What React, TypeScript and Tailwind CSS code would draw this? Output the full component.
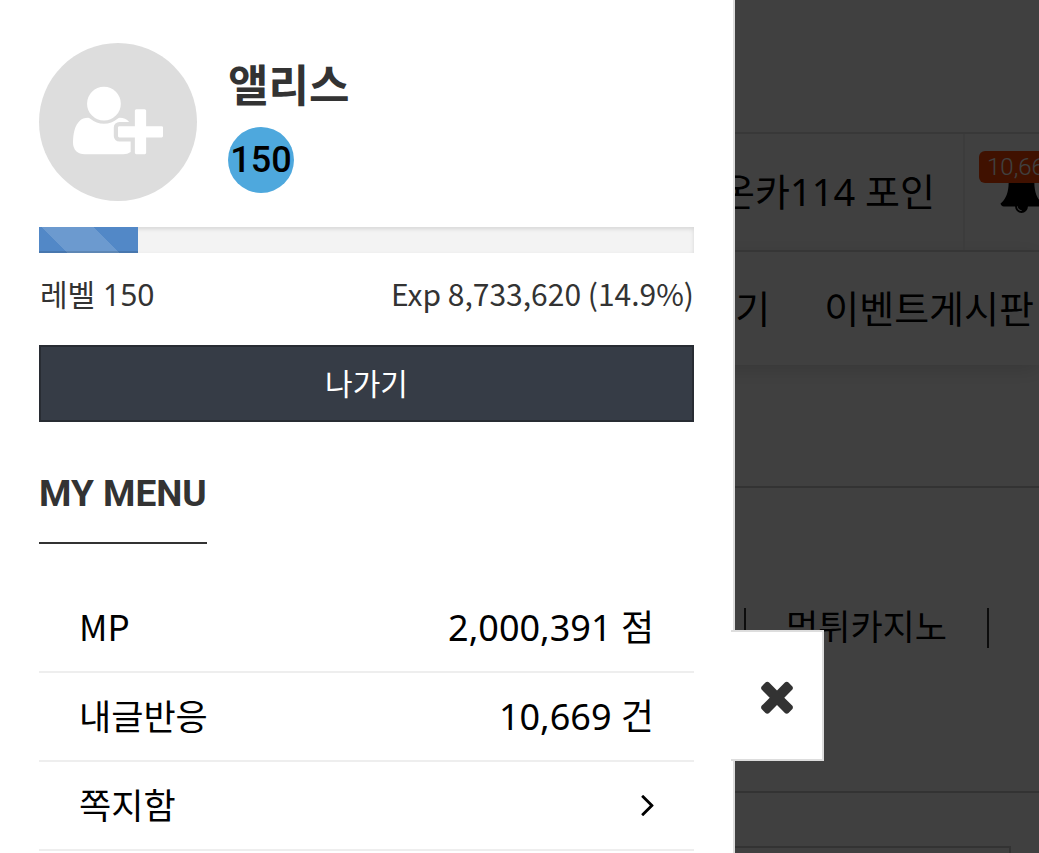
import type { ReactNode } from 'react';

type MenuItem = {
  label: string;
  value?: string;
};

const menu: MenuItem[] = [
  { label: 'MP', value: '2,000,391 점' },
  { label: '내글반응', value: '10,669 건' },
  { label: '쪽지함' },
];

const exp = { level: 150, points: '8,733,620', percent: 14.9 };

export default function App() {
  return (
    <div className="relative h-screen overflow-hidden bg-white font-['Noto_Sans','Noto_Sans_CJK_KR',sans-serif] text-black">
      <Page />
      <div className="absolute inset-0 bg-black/75" />
      <Drawer />
    </div>
  );
}

function Page() {
  return (
    <main className="flex h-full flex-col overflow-hidden whitespace-nowrap">
      <div className="h-[132px] shrink-0" />

      {/* Notice bar */}
      <div className="flex h-[120px] shrink-0 items-stretch justify-end border-y-2 border-[#e0e0e0]">
        <p className="pr-7 text-[38px] leading-[114px]">온카114 포인</p>
        <button aria-label="알림" className="relative w-[76px] shrink-0 overflow-hidden border-l-2 border-[#eee]">
          <BellIcon className="absolute top-[34px] left-[34px] size-[45px]" />
          <span className="absolute top-[17px] left-[14px] rounded-md bg-[#ff4500] px-2 font-['Roboto',sans-serif] text-[24px] leading-8 font-light text-white">
            10,669
          </span>
        </button>
      </div>

      {/* Board tabs */}
      <nav className="flex h-[113px] shrink-0 items-center justify-end gap-[54px] pr-[5px] text-[38px] shadow-[0_4px_20px_rgba(0,0,0,0.15)]">
        <a href="#review">후기</a>
        <a href="#event">이벤트게시판</a>
      </nav>

      <div className="h-[123px] shrink-0 border-b-2 border-[#ccc]" />

      {/* Keyword links */}
      <div className="flex h-[305px] shrink-0 items-center justify-end gap-10 border-b-2 border-[#ccc] pr-[50px] pb-6 text-[35px]">
        <Separator />
        <a href="#casino">먹튀카지노</a>
        <Separator />
      </div>

      <div className="mt-[53px] mr-7 flex-1 border-2 border-b-0 border-[#ccc]" />
    </main>
  );
}

function Separator() {
  return <span className="h-10 w-[2px] bg-[#333]" />;
}

function Drawer() {
  return (
    <aside className="absolute inset-y-0 left-0 w-[calc(100%-304px)] border-r-2 border-[#ddd] bg-white px-[39px] pt-[43px] text-[#333]">
      <div className="flex gap-[31px]">
        <div className="flex size-[158px] shrink-0 items-center justify-center rounded-full bg-[#ddd] pb-1">
          <UserPlusIcon className="h-[79px] w-[90px] text-white" />
        </div>
        <div className="pt-[10px]">
          <h2 className="text-[44px] leading-[64px] font-bold">앨리스</h2>
          <div className="mt-[10px] flex size-[66px] items-center justify-center rounded-full bg-[#4ea8dd] font-['Roboto',sans-serif] text-[36px] font-medium text-black">
            {exp.level}
          </div>
        </div>
      </div>

      <div className="mt-[26px] h-[26px] bg-[#f3f3f3] shadow-[inset_0_2px_4px_rgba(0,0,0,0.12)]">
        <div
          className="h-full bg-[#5288c7] bg-[linear-gradient(45deg,rgba(255,255,255,.15)_25%,transparent_25%,transparent_50%,rgba(255,255,255,.15)_50%,rgba(255,255,255,.15)_75%,transparent_75%)] bg-[length:104px_104px] bg-[position:2px_0px] shadow-[inset_0_-2px_0_rgba(0,0,0,0.12)]"
          style={{ width: `${exp.percent + 0.2}%` }}
        />
      </div>
      <div className="flex items-baseline justify-between pt-[18px] pb-5 text-[30px] leading-[44px]">
        <span className="pl-[1px]">레벨 {exp.level}</span>
        <span className="font-['Noto_Sans_CJK_KR',sans-serif]">
          Exp {exp.points} ({exp.percent}%)
        </span>
      </div>

      <button className="mt-2 h-[77px] w-full border-2 border-[#282c33] bg-[#363c46] text-[30px] text-white">
        나가기
      </button>

      <h3 className="mt-11 inline-block border-b-2 border-[#333] pb-5 font-['Roboto',sans-serif] text-[37px] leading-[56px] font-bold">
        MY MENU
      </h3>

      <ul className="mt-10 text-[36px] text-black">
        {menu.map((item) => (
          <MenuRow key={item.label} label={item.label}>
            {item.value ?? <AngleRightIcon className="h-[21px] w-[13px]" />}
          </MenuRow>
        ))}
      </ul>

      <button
        aria-label="닫기"
        className="absolute top-[630px] -right-[91px] flex h-[131px] w-[93px] items-center justify-center border-2 border-l-0 border-[#ddd] bg-white text-[#333]"
      >
        <CloseIcon className="size-12" />
      </button>
    </aside>
  );
}

function MenuRow({ label, children }: { label: string; children: ReactNode }) {
  return (
    <li className="border-b-2 border-[#eee]">
      <a href="#menu" className="flex h-[87px] items-center justify-between px-10">
        <span className="pb-[3px] font-['Noto_Sans_CJK_KR',sans-serif] text-[35px]">{label}</span>
        <span>{children}</span>
      </a>
    </li>
  );
}

function UserPlusIcon({ className }: { className?: string }) {
  return (
    <svg viewBox="0 0 2048 1792" fill="currentColor" className={className}>
      <path d="M704 896q-159 0-271.500-112.500t-112.500-271.500 112.500-271.500 271.500-112.500 271.500 112.500 112.500 271.500-112.500 271.500-271.500 112.500zm960 128h352q13 0 22.500 9.500t9.500 22.500v192q0 13-9.500 22.500t-22.500 9.500h-352v352q0 13-9.500 22.500t-22.500 9.500h-192q-13 0-22.500-9.500t-9.500-22.500v-352h-352q-13 0-22.500-9.500t-9.500-22.500v-192q0-13 9.500-22.500t22.500-9.500h352v-352q0-13 9.500-22.500t22.500-9.500h192q13 0 22.500 9.500t9.500 22.500v352zm-736 224q0 52 38 90t90 38h256v238q-68 50-171 50h-874q-121 0-194-69t-73-190q0-53 3.500-103.500t14-109 26.500-108.500 43-97.500 62-81 85.500-53.500 111.500-20q19 0 39 17 79 61 154.500 91.500t164.500 30.500 164.500-30.500 154.500-91.500q20-17 39-17 132 0 217 96h-223q-52 0-90 38t-38 90v192z" />
    </svg>
  );
}

function BellIcon({ className }: { className?: string }) {
  return (
    <svg viewBox="0 0 1792 1792" fill="currentColor" className={className}>
      <path d="M912 1696q0-16-16-16-59 0-101.500-42.500t-42.500-101.500q0-16-16-16t-16 16q0 73 51.500 124.500t124.500 51.500q16 0 16-16zm816-288q0 52-38 90t-90 38h-448q0 106-75 181t-181 75-181-75-75-181h-448q-52 0-90-38t-38-90q50-42 91-88t85-119.500 74.500-158.500 50-206 19.500-260q0-152 117-282.500t307-158.500q-8-19-8-39 0-40 28-68t68-28 68 28 28 68q0 20-8 39 190 28 307 158.500t117 282.500q0 139 19.500 260t50 206 74.500 158.500 85 119.500 91 88z" />
    </svg>
  );
}

function CloseIcon({ className }: { className?: string }) {
  return (
    <svg viewBox="0 0 1792 1792" fill="currentColor" className={className}>
      <path d="M1490 1322q0 40-28 68l-136 136q-28 28-68 28t-68-28l-294-294-294 294q-28 28-68 28t-68-28l-136-136q-28-28-28-68t28-68l294-294-294-294q-28-28-28-68t28-68l136-136q28-28 68-28t68 28l294 294 294-294q28-28 68-28t68 28l136 136q28 28 28 68t-28 68l-294 294 294 294q28 28 28 68z" />
    </svg>
  );
}

function AngleRightIcon({ className }: { className?: string }) {
  return (
    <svg viewBox="589 461 582 998" fill="currentColor" className={className}>
      <path d="M1171 960q0 13-10 23l-466 466q-10 10-23 10t-23-10l-50-50q-10-10-10-23t10-23l393-393-393-393q-10-10-10-23t10-23l50-50q10-10 23-10t23 10l466 466q10 10 10 23z" />
    </svg>
  );
}
